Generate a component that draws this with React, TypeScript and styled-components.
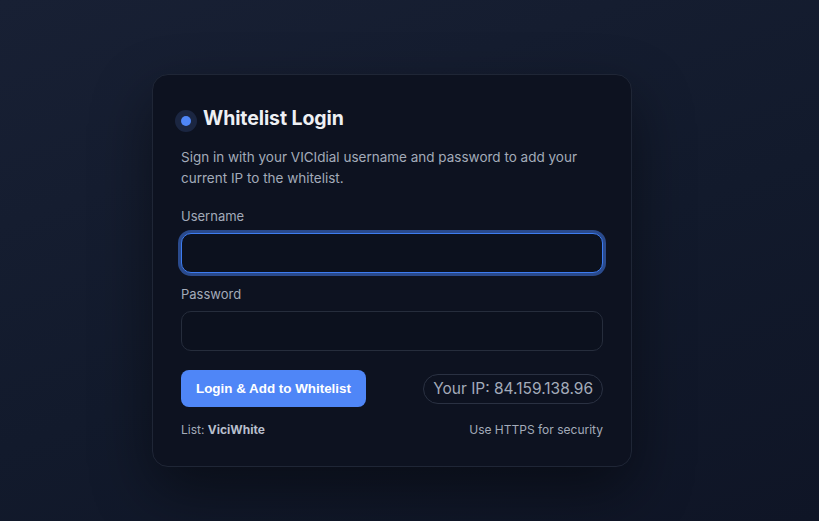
import React from "react";
import styled, { createGlobalStyle } from "styled-components";

const GlobalStyle = createGlobalStyle`
  html, body {
    margin: 0;
    padding: 0;
    height: 100%;
  }
  body {
    font-family: Inter, "Noto Sans", "Liberation Sans", sans-serif;
    background: #111827;
    -webkit-font-smoothing: antialiased;
  }
  * { box-sizing: border-box; }
`;

const Page = styled.div`
  min-height: 100vh;
  display: flex;
  justify-content: center;
  align-items: center;
  padding: 20px 35px 0 0;
  background: linear-gradient(160deg, #182034 0%, #121a2c 55%, #0f1526 100%);
`;

const Card = styled.form`
  width: 480px;
  padding: 28px 28px 28px;
  background: #0d1220;
  border: 1px solid #1f2636;
  border-radius: 16px;
  box-shadow: 0 24px 60px rgba(0, 0, 0, 0.45);
`;

const Header = styled.div`
  display: flex;
  align-items: center;
  gap: 12px;
  height: 30px;
`;

const Dot = styled.span`
  width: 10px;
  height: 10px;
  margin-top: 6px;
  border-radius: 50%;
  background: #4f86f7;
  box-shadow: 0 0 0 6px #1b2641;
`;

const Title = styled.h1`
  margin: 0;
  font-size: 19.5px;
  font-weight: 700;
  color: #eef0f4;
  letter-spacing: -0.1px;
`;

const Description = styled.p`
  margin: 14px 0 0;
  font-size: 13.5px;
  line-height: 21px;
  color: #a3abb9;
`;

const Field = styled.div<{ $top: number }>`
  display: flex;
  flex-direction: column;
  gap: 8px;
  margin-top: ${(p) => p.$top}px;
`;

const Label = styled.label`
  font-size: 13px;
  line-height: 18px;
  color: #a3abb9;
`;

const Input = styled.input`
  height: 40px;
  width: 100%;
  padding: 0 14px;
  background: #0c111e;
  border: 1px solid #262d3c;
  border-radius: 10px;
  color: #e5e7eb;
  caret-color: #e5e7eb;
  font-family: inherit;
  font-size: 14px;
  outline: none;

  &:focus {
    border-color: #3d7cf0;
    box-shadow: 0 0 0 3px #2a4a8c;
  }
`;

const Actions = styled.div`
  display: flex;
  align-items: center;
  justify-content: space-between;
  margin-top: 19px;
`;

const SubmitButton = styled.button`
  height: 37px;
  padding: 0 15px;
  border: none;
  border-radius: 8px;
  background: #4f86f7;
  color: #fff;
  font-family: "Liberation Sans", Arial, sans-serif;
  font-size: 13.4px;
  font-weight: 700;
  cursor: pointer;
`;

const IpPill = styled.div`
  height: 30px;
  display: flex;
  align-items: center;
  padding: 0 9px;
  border: 1px solid #2a3142;
  border-radius: 999px;
  font-size: 15.5px;
  color: #a3abb9;
`;

const Footer = styled.div`
  display: flex;
  justify-content: space-between;
  margin-top: 15px;
  font-size: 12px;
  line-height: 16px;
  color: #a3abb9;

  strong {
    font-weight: 700;
    color: #b8bfcc;
  }
`;

const App: React.FC = () => {
  return (
    <>
      <GlobalStyle />
      <Page>
        <Card onSubmit={(e) => e.preventDefault()}>
          <Header>
            <Dot />
            <Title>Whitelist Login</Title>
          </Header>
          <Description>
            Sign in with your VICIdial username and password to add your current IP to the
            whitelist.
          </Description>

          <Field $top={18}>
            <Label htmlFor="username">Username</Label>
            <Input id="username" type="text" autoFocus />
          </Field>

          <Field $top={12}>
            <Label htmlFor="password">Password</Label>
            <Input id="password" type="password" />
          </Field>

          <Actions>
            <SubmitButton type="submit">Login &amp; Add to Whitelist</SubmitButton>
            <IpPill>Your IP: 84.159.138.96</IpPill>
          </Actions>

          <Footer>
            <span>
              List: <strong>ViciWhite</strong>
            </span>
            <span>Use HTTPS for security</span>
          </Footer>
        </Card>
      </Page>
    </>
  );
};

export default App;
